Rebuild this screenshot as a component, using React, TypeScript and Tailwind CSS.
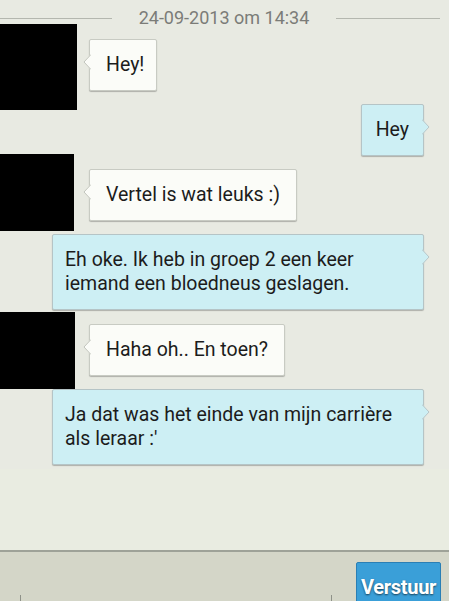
import type { ReactNode } from 'react'

const font = { fontFamily: 'Roboto, "Liberation Sans", sans-serif' }

type Side = 'in' | 'out'

// Small tail on the bubble, pointing to the sender's side
function Tail({ side }: { side: Side }) {
  const fill = side === 'in' ? '#fbfcf8' : '#cdeff4'
  if (side === 'in') {
    return (
      <svg className="absolute left-[-7px] top-[14px]" width="8" height="16" viewBox="0 0 8 16">
        <path d="M8 0 L1 8 L8 16 Z" fill={fill} />
        <path d="M8 0.5 L1 8 L8 15.5" fill="none" stroke="#c2c5bd" strokeWidth="1" />
      </svg>
    )
  }
  return (
    <svg className="absolute right-[-7px] top-[14px]" width="8" height="16" viewBox="0 0 8 16">
      <path d="M0 0 L7 8 L0 16 Z" fill={fill} />
      <path d="M0 0.5 L7 8 L0 15.5" fill="none" stroke="#b9c6c8" strokeWidth="1" />
    </svg>
  )
}

function Bubble({ side, children, className = '' }: { side: Side; children: ReactNode; className?: string }) {
  const colors =
    side === 'in'
      ? 'bg-[#fbfcf8] border-[#c8cbc3]'
      : 'bg-[#cdeff4] border-[#b5c4c6]'
  return (
    <div
      className={`relative rounded-[2px] border ${colors} shadow-[0_1px_1px_rgba(0,0,0,0.25)] py-[13px] text-[19.5px] leading-[24px] text-[#1c1c1c] ${className}`}
    >
      <Tail side={side} />
      {children}
    </div>
  )
}

export default function App() {
  return (
    <div className="w-[449px] h-[601px] overflow-hidden bg-[#e8eae2] flex flex-col" style={font}>
      {/* date divider */}
      <div className="flex items-center pt-[8px] h-[28px] mb-[-4px]">
        <div className="w-[112px] h-px bg-[#b4b7af]" />
        <div className="flex-1 text-center text-[18px] leading-[20px] text-[#7b7c78]">24-09-2013 om 14:34</div>
        <div className="w-[104px] h-px bg-[#b4b7af] mr-[9px]" />
      </div>

      <div className="flex items-start">
        <div className="w-[77px] h-[86px] bg-black" />
        <Bubble side="in" className="ml-[12px] mt-[15px] pl-[16px] pr-[12px]">Hey!</Bubble>
      </div>

      <div className="flex justify-end pr-[25px] mt-[-6px]">
        <Bubble side="out" className="px-[14px]">Hey</Bubble>
      </div>

      <div className="flex items-start mt-[-2px]">
        <div className="w-[74px] h-[77px] bg-black" />
        <Bubble side="in" className="ml-[15px] mt-[15px] pl-[16px] pr-[16px]">Vertel is wat leuks :)</Bubble>
      </div>

      <div className="flex mt-[3px] pl-[52px]">
        <Bubble side="out" className="w-[372px] pl-[12px] pr-[10px]">
          Eh oke. Ik heb in groep 2 een keer iemand een bloedneus geslagen.
        </Bubble>
      </div>

      <div className="flex items-start mt-[2px]">
        <div className="w-[75px] h-[77px] bg-black" />
        <Bubble side="in" className="ml-[14px] mt-[12px] pl-[16px] pr-[16px]">Haha oh.. En toen?</Bubble>
      </div>

      <div className="flex pl-[52px]">
        <Bubble side="out" className="w-[372px] pl-[12px] pr-[10px]">
          Ja dat was het einde van mijn carrière als leraar :'
        </Bubble>
      </div>

      <div className="flex-1 bg-[#e9ece1] mt-[4px]" />
      <div className="h-[2px] bg-[#9ea298]" />

      {/* composer */}
      <div className="h-[49px] bg-[#d4d6c8] flex items-start">
        <div className="relative ml-[20px] mt-[40px] w-[312px] h-[9px]">
          <div className="absolute left-0 bottom-0 w-px h-[6px] bg-[#8e9188]" />
          <div className="absolute right-0 bottom-0 w-px h-[6px] bg-[#8e9188]" />
        </div>
        <button className="ml-[24px] mt-[10px] w-[85px] h-[45px] rounded-[2px] bg-[#3a9fd8] border border-[#2a7fb5] text-white font-bold text-[20px] leading-[20px] pt-[4px] tracking-[-0.3px] [text-shadow:0_1px_2px_rgba(0,0,0,0.6)]">
          Verstuur
        </button>
      </div>
    </div>
  )
}
